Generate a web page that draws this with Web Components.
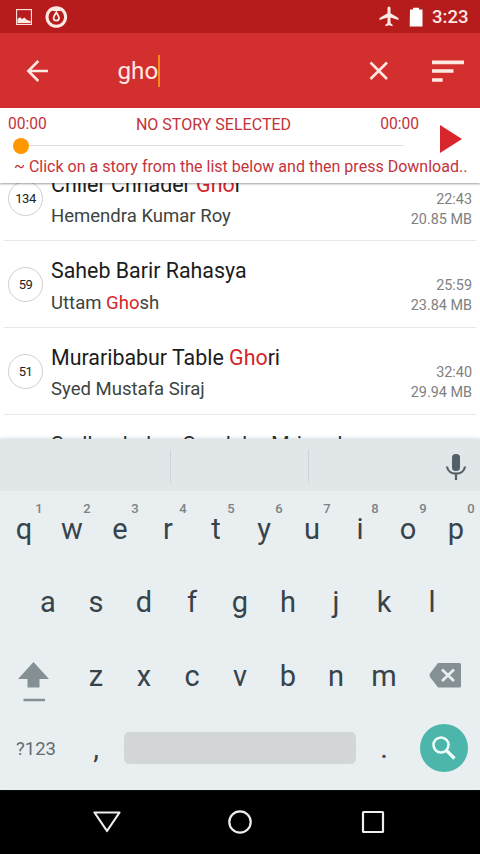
<!DOCTYPE html>
<html lang="en">
<head>
<meta charset="utf-8">
<title>Stories</title>
<style>
html,body{margin:0;padding:0}
body{width:480px;height:854px;overflow:hidden;font-family:Roboto,"Noto Sans",sans-serif;background:#fff}
</style>
</head>
<body>
<story-app></story-app>
<script>
const define = (name, html) => customElements.define(name, class extends HTMLElement {
  constructor() {
    super();
    this.attachShadow({mode: 'open'});
  }
  connectedCallback() {
    const t = document.createElement('template');
    t.innerHTML = typeof html === 'function' ? html(this) : html;
    this.shadowRoot.replaceChildren(t.content.cloneNode(true));
  }
});

define('status-bar', `
<style>
:host{display:flex;align-items:center;height:33px;box-sizing:border-box;padding:0 11px 0 16px;background:#b71c1c;color:#ffe9e4}
svg{display:block;flex:none}
.photo{margin-right:13px}
.air{margin-left:auto;margin-right:10px}
.bat{margin-right:9px}
span{font-size:18.500px;line-height:33px;font-weight:500;width:37px;white-space:nowrap;padding-top:1px}
</style>
<svg class="photo" width="16" height="16" viewBox="0 0 16 16"><rect x=".6" y=".6" width="14.8" height="14.8" fill="none" stroke="currentColor" stroke-width="1.1"/><path d="M1.500 14V10L4 8.300L6 10L8.500 8.500L11 11L14.500 12V14Z" fill="currentColor"/></svg>
<svg width="24" height="24" viewBox="0 0 24 24"><circle cx="11.300" cy="12" r="9.300" fill="none" stroke="currentColor" stroke-width="3"/><path d="M4.800 3.600L8 5H14.600L17.800 3.600" fill="none" stroke="currentColor" stroke-width="2"/><path d="M11.300 7.300C10 9.600 8.600 11.200 8.600 13A2.700 2.700 0 0 0 14 13C14 11.200 12.600 9.600 11.300 7.300Z" fill="none" stroke="currentColor" stroke-width="1.800"/></svg>
<svg class="air" width="20" height="21" viewBox="0 0 20 21"><path d="M19.500 14V12L11.500 7.200V2A1.500 1.500 0 0 0 8.500 2V7.200L.5 12V14L8.500 11.600V17L6.400 18.700V20.200L10 19.200L13.600 20.200V18.700L11.500 17V11.600Z" fill="currentColor"/></svg>
<svg class="bat" width="14" height="20" viewBox="0 0 14 20"><path d="M1 2.500H4V.7H10V2.500H13.500V19.500H.7Z" fill="#fff"/></svg>
<span>3:23</span>`);

define('search-bar', `
<style>
:host{display:flex;align-items:center;height:75px;box-sizing:border-box;padding:0 16px 0 26px;background:#d32f2f;color:#ffe9e2}
svg{display:block;flex:none}
.q{display:flex;align-items:center;margin-left:68.500px;flex:1;font-size:24.200px;line-height:36px;height:32px}
.caret{width:2px;height:32px;background:#f98b1c}
.x{margin-right:43px}
</style>
<svg width="23" height="24" viewBox="0 0 23 24"><path d="M22 12H3M12.300 2L2.300 12L12.300 22" fill="none" stroke="currentColor" stroke-width="2.500"/></svg>
<div class="q"><span>gho</span><i class="caret"></i></div>
<svg class="x" width="20" height="20" viewBox="0 0 20 20"><path d="M1.500 1.500L18 18M18 1.500L1.500 18" stroke="currentColor" stroke-width="2.500"/></svg>
<svg width="32" height="22" viewBox="0 0 32 22"><path d="M0 2.300H32M0 11H21.500M0 20H10.700" stroke="currentColor" stroke-width="3.700"/></svg>`);

define('story-player', `
<style>
:host{display:grid;grid-template-columns:410px 1fr;grid-template-rows:31px 12px 32px;height:75px;background:#fff;color:#c5323a;position:relative;z-index:2;box-shadow:0 1px 2px rgba(0,0,0,.38)}
.times{grid-column:1;grid-row:1;display:grid;grid-template-columns:1fr auto 1fr;padding:0 0 0 8px;width:411px;line-height:33px;font-size:15.600px}
.times span:last-child{text-align:right}
.times .t{font-size:16.050px}
.track{grid-column:1;grid-row:2;display:flex;align-items:center;padding:0 6px 0 13px;height:13px}
.dot{width:16px;height:16px;border-radius:50%;background:#ff9800;flex:none}
.line{height:1px;flex:1;background:#dedede}
.play{grid-column:2;grid-row:1/3;padding:17px 0 0 30px}
.hint{grid-column:1/3;grid-row:3;line-height:31px;padding-left:14px;font-size:16.040px;white-space:nowrap}
svg{display:block}
</style>
<div class="times"><span>00:00</span><span class="t">NO STORY SELECTED</span><span>00:00</span></div>
<div class="play"><svg width="22" height="28" viewBox="0 0 22 28"><path d="M0 0L22 14L0 28Z" fill="#d8262c"/></svg></div>
<div class="track"><i class="dot"></i><i class="line"></i></div>
<div class="hint">~ Click on a story from the list below and then press Download..</div>`);

define('story-row', el => `
<style>
:host{display:grid;grid-template-columns:51px 1fr auto;height:86.700px;box-sizing:border-box;padding-right:8px;background:linear-gradient(#e8e8e8,#e8e8e8) 4px 100%/472px 1px no-repeat}
.num{width:35px;height:35px;box-sizing:border-box;border:1.600px solid #d0d0d0;border-radius:50%;margin:26px 0 0 8px;font-size:13px;letter-spacing:-.5px;line-height:33px;text-align:center;color:#222}
.txt{padding-top:16px;white-space:nowrap}
.title{font-size:21.400px;line-height:28px;color:#1c1c1c}
.author{font-size:18.550px;line-height:24px;color:#3d443f;margin-top:5.500px}
.meta{padding-top:35px;text-align:right;font-size:14.400px;line-height:20px;color:#808080}
</style>
<div class="num">${el.getAttribute('num')}</div>
<div class="txt"><div class="title"><slot name="title"></slot></div><div class="author"><slot name="author"></slot></div></div>
<div class="meta">${el.getAttribute('time')}<br>${el.getAttribute('size')}</div>`);

define('story-list', `
<style>
:host{display:block;height:256px;overflow:hidden;background:#fff;box-sizing:border-box}
.rows{margin-top:-28.500px}
b{font-weight:400;color:#d3262b}
</style>
<div class="rows">
<story-row num="134" time="22:43" size="20.85 MB"><span slot="title">Chiler Chhader <b>Gho</b>r</span><span slot="author">Hemendra Kumar Roy</span></story-row>
<story-row num="59" time="25:59" size="23.84 MB"><span slot="title">Saheb Barir Rahasya</span><span slot="author">Uttam <b>Gho</b>sh</span></story-row>
<story-row num="51" time="32:40" size="29.94 MB"><span slot="title">Muraribabur Table <b>Gho</b>ri</span><span slot="author">Syed Mustafa Siraj</span></story-row>
<story-row num="" time="" size=""><span slot="title">Sadhanbabur Sandeha Mriganka</span></story-row>
</div>`);

define('key-cap', el => `
<style>
:host{display:block;position:relative;width:48px;text-align:center;color:#37434a;font-size:29px;line-height:40px}
sup{position:absolute;left:35px;top:-8px;width:8px;font-size:13px;line-height:16px;font-weight:500;color:#7b8386;text-align:center}
</style><slot></slot>${el.hasAttribute('alt') ? `<sup>${el.getAttribute('alt')}</sup>` : ''}`);

const keys = (s, alts = '') => [...s].map((c, i) => `<key-cap${alts ? ` alt="${alts[i]}"` : ''}>${c}</key-cap>`).join('');

define('soft-keyboard', `
<style>
:host{display:block;height:351px;background:#e9eef1;position:relative;z-index:1;box-shadow:0 -1px 3px rgba(150,170,180,.35)}
svg{display:block;flex:none}
.sug{display:flex;align-items:center;height:52px;background:#e1e6e8;box-sizing:border-box;padding:3px 14px 0 170px}
.sug i{width:1px;height:33px;background:#cdd3d6;margin-right:137px}
.sug i+i{margin-right:auto}
.row{display:flex;height:73px;align-items:center;box-sizing:border-box}
.r1{height:74px;padding-top:2px}
.r2{padding:1px 24px 0}
.r3{padding-top:2px}
.shift{width:72px;display:flex;padding:13px 0 0 18px;box-sizing:border-box}
.back{padding-left:21px;margin-top:-1px}
.sym{width:72px;text-align:center;font-size:18.500px;color:#626d72;padding-top:2px}
.space{width:232px;height:32px;border-radius:5px;background:#d2d6d9;margin:0 4px}
.go{width:48px;height:48px;border-radius:50%;background:#4cb6ac;display:flex;align-items:center;justify-content:center;margin-left:12px}
.r4{padding-top:1px}
</style>
<div class="sug"><i></i><i></i><svg width="20" height="26" viewBox="0 0 20 26"><rect x="6" y="0" width="8" height="17" rx="3.500" fill="#546067"/><path d="M1 12.500C2 22 18 22 19 12.500M10 19.500V26" fill="none" stroke="#546067" stroke-width="2.200"/></svg></div>
<div class="row r1">${keys('qwertyuiop', '1234567890')}</div>
<div class="row r2">${keys('asdfghjkl')}</div>
<div class="row r3"><div class="shift"><svg width="31" height="40" viewBox="0 0 31 40"><path d="M15.500 0L31 17H21.500V25.500H9.500V17H0Z" fill="#859094"/><path d="M5.500 38H27" stroke="#859094" stroke-width="2.500"/></svg></div>${keys('zxcvbnm')}<div class="back"><svg width="33" height="25" viewBox="0 0 33 25"><path d="M9 0H30.500Q32 0 32 1.500V23Q32 24.500 30.500 24.500H9L1 14Q0 12.300 1 10.500Z" fill="#859094"/><path d="M13 6.500L25 18M25 6.500L13 18" stroke="#e9eef1" stroke-width="2.700"/></svg></div></div>
<div class="row r4"><div class="sym">?123</div>${keys(',')}<div class="space"></div>${keys('.')}<div class="go"><svg width="24" height="24" viewBox="0 0 24 24"><circle cx="9" cy="9" r="7.500" fill="none" stroke="#effffa" stroke-width="2.600"/><path d="M14 14L22.500 22.500" stroke="#effffa" stroke-width="3.200"/></svg></div></div>`);

define('nav-bar', `
<style>
:host{display:grid;grid-template-columns:93px 28px 107px 24px 109px 24px;height:64px;background:#000;align-items:center;box-sizing:border-box}
svg{display:block;fill:none;stroke:#eee;stroke-width:2.200}
</style>
<span></span><svg width="28" height="22" viewBox="0 0 28 22"><path d="M1.500 1.500H26.500L14 20Z" stroke-linejoin="round"/></svg>
<span></span><svg width="24" height="24" viewBox="0 0 24 24"><circle cx="12" cy="12" r="10.700"/></svg>
<span></span><svg width="24" height="24" viewBox="0 0 24 24"><rect x="2" y="2" width="20" height="20" rx=".5"/></svg>`);

define('story-app', `
<style>:host{display:flex;flex-direction:column;width:480px;height:854px;overflow:hidden}status-bar,search-bar,story-player,story-list,soft-keyboard,nav-bar{flex:none}</style>
<status-bar></status-bar><search-bar></search-bar><story-player></story-player><story-list></story-list><soft-keyboard></soft-keyboard><nav-bar></nav-bar>`);
</script>
</body>
</html>
